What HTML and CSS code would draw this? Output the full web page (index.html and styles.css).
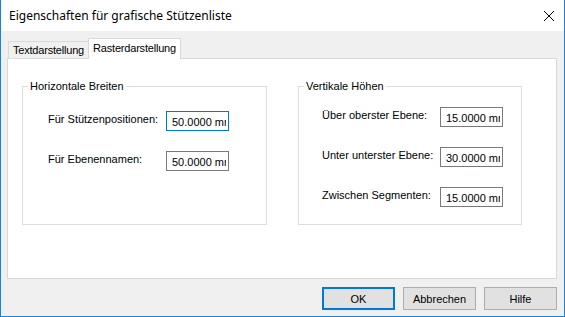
FILE: index.html
```html
<!DOCTYPE html>
<html lang="de">
<head>
  <meta charset="UTF-8" />
  <title>Eigenschaften für grafische Stützenliste</title>
  <link rel="stylesheet" href="styles.css">
</head>
<body>

  <div class="window">
    <!-- Title bar -->
    <div class="titlebar">
      <span class="title">Eigenschaften für grafische Stützenliste</span>
      <svg class="close" width="10" height="10" viewBox="0 0 10 10">
        <path d="M0 0 L10 10 M10 0 L0 10" stroke="#000" stroke-width="1" fill="none"/>
      </svg>
    </div>

    <div class="dialog">
      <!-- Tabs -->
      <div class="tabs">
        <div class="tab">Textdarstellung</div>
        <div class="tab active">Rasterdarstellung</div>
      </div>

      <!-- Tab page -->
      <div class="panel">
        <fieldset class="group group-h">
          <legend>Horizontale Breiten</legend>
          <div class="rows">
            <label for="posWidth">Für Stützenpositionen:</label>
            <input type="text" id="posWidth" class="focused" value="50.0000 mm">
            <label for="levelWidth">Für Ebenennamen:</label>
            <input type="text" id="levelWidth" value="50.0000 mm">
          </div>
        </fieldset>

        <fieldset class="group group-v">
          <legend>Vertikale Höhen</legend>
          <div class="rows">
            <label for="aboveTop">Über oberster Ebene:</label>
            <input type="text" id="aboveTop" value="15.0000 mm">
            <label for="belowBottom">Unter unterster Ebene:</label>
            <input type="text" id="belowBottom" value="30.0000 mm">
            <label for="betweenSeg">Zwischen Segmenten:</label>
            <input type="text" id="betweenSeg" value="15.0000 mm">
          </div>
        </fieldset>
      </div>

      <!-- Buttons -->
      <div class="buttons">
        <button class="default">OK</button>
        <button>Abbrechen</button>
        <button>Hilfe</button>
      </div>
    </div>
  </div>

</body>
</html>
```

FILE: styles.css
```css
* {
  box-sizing: border-box;
  font-family: 'Liberation Sans', Arial, sans-serif;
}

body {
  margin: 0;
  background: #ffffff;
  font-size: 11px;
  color: #000;
}

/* Window frame */
.window {
  width: 565px;
  height: 317px;
  border: 1px solid #1883d7;
  border-top: none;
  display: flex;
  flex-direction: column;
}

.titlebar {
  height: 31px;
  background: #fff;
  display: flex;
  align-items: center;
  padding-left: 8px;
  flex-shrink: 0;
}

.title {
  font-family: 'Noto Sans', sans-serif;
  font-size: 12px;
  line-height: 16px;
  padding-top: 1px;
}

.close {
  margin-left: auto;
  margin-right: 10px;
}

.dialog {
  flex: 1;
  background: #f0f0f0;
  padding: 7px 7px 0 6px;
  display: flex;
  flex-direction: column;
}

/* Tabs */
.tabs {
  display: flex;
  align-items: flex-end;
  height: 20px;
  padding-left: 1px;
}

.tab {
  height: 17px;
  width: 81px;
  border: 1px solid #d9d9d9;
  border-bottom: none;
  background: #f0f0f0;
  display: flex;
  align-items: center;
  justify-content: center;
  line-height: 16px;
  letter-spacing: -0.2px;
  white-space: nowrap;
}

.tab.active {
  position: relative;
  z-index: 1;
  height: 21px;
  width: 93px;
  margin-left: -1px;
  margin-bottom: -1px;
  padding-bottom: 3px;
  background: #fff;
}

/* Tab page */
.panel {
  height: 221px;
  background: #fff;
  border: 1px solid #d9d9d9;
  display: flex;
  align-items: flex-start;
  padding: 19px 0 0 14px;
}

.group {
  margin: 0;
  padding: 0;
  border: 1px solid #dcdcdc;
  height: 147px;
}

.group legend {
  margin-left: 5px;
  padding: 0 2px;
  line-height: 16px;
}

.group-h {
  width: 245px;
}

.group-v {
  width: 224px;
  margin-left: 31px;
}

.rows {
  display: grid;
  grid-template-columns: 118px 63px;
  row-gap: 20px;
}

.group-h .rows {
  padding: 17px 0 0 25px;
}

.group-v .rows {
  padding: 13px 0 0 23px;
}

label {
  line-height: 16px;
  white-space: nowrap;
}

input {
  width: 63px;
  height: 20px;
  margin: 0;
  padding: 2px 2px 0 5px;
  border: 1px solid #7a7a7a;
  font-size: 11px;
  color: #000;
  background: #fff;
  outline: none;
}

input.focused {
  border-color: #0078d7;
}

/* Buttons */
.buttons {
  display: flex;
  justify-content: flex-end;
  gap: 8px;
  margin-top: 8px;
}

button {
  width: 73px;
  height: 23px;
  padding: 0;
  background: #e1e1e1;
  border: 1px solid #adadad;
  font-size: 11px;
  color: #000;
}

button.default {
  border: 2px solid #0078d7;
}
```
